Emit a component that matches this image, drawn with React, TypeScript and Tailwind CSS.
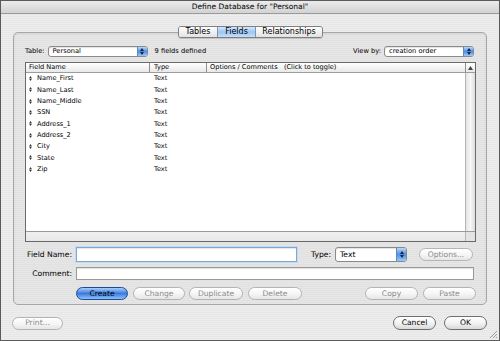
import React from "react";

const fields = [
  "Name_First",
  "Name_Last",
  "Name_Middle",
  "SSN",
  "Address_1",
  "Address_2",
  "City",
  "State",
  "Zip",
];

const pillDefault =
  "border-[#1c4a94] bg-gradient-to-b from-[#a9cff7] via-[#3a7ade] to-[#8fc2f6] text-black";
const pillEnabled =
  "border-[#6e6e6e] bg-gradient-to-b from-white via-[#f3f3f3] to-[#d9d9d9] text-black";
const pillDisabled =
  "border-[#b4b4b4] bg-gradient-to-b from-white via-[#f6f6f6] to-[#e6e6e6] text-[#8a8a8a]";

function Pill({
  label,
  kind,
  className,
}: {
  label: string;
  kind: "default" | "enabled" | "disabled";
  className: string;
}) {
  const look =
    kind === "default" ? pillDefault : kind === "enabled" ? pillEnabled : pillDisabled;
  return (
    <div
      className={`flex items-center justify-center rounded-full border text-[7.6px] leading-none ${look} ${className}`}
    >
      {label}
    </div>
  );
}

function Arrows({ className }: { className?: string }) {
  return (
    <svg width="4" height="7" viewBox="0 0 4 7" className={className}>
      <polygon points="2,0 4,3 0,3" fill="currentColor" />
      <polygon points="0,4 4,4 2,7" fill="currentColor" />
    </svg>
  );
}

function Popup({
  label,
  className,
  text,
}: {
  label: string;
  className: string;
  text: string;
}) {
  return (
    <div
      className={`flex items-stretch overflow-hidden rounded-[3px] border border-[#8a8a8a] bg-white shadow-[inset_0_1px_1px_rgba(0,0,0,0.12)] ${className}`}
    >
      <span className={`flex flex-1 items-center pl-[4px] leading-none text-black ${text}`}>{label}</span>
      <span className="flex w-[10px] items-center justify-center border-l border-[#5f87c4] bg-gradient-to-b from-[#b9d7f8] via-[#4f8ee4] to-[#9ccaf7] text-[#14264a]">
        <Arrows />
      </span>
    </div>
  );
}

export default function App() {
  return (
    <div className="relative flex h-[341px] w-[500px] flex-col overflow-hidden border border-[#5a5a5a] bg-[repeating-linear-gradient(to_bottom,#ededed_0px,#ededed_1px,#e7e7e7_1px,#e7e7e7_2px)] font-['DejaVu_Sans',sans-serif] text-black">
      {/* title bar */}
      <div className="flex h-[13px] items-center justify-center border-b border-[#9a9a9a] bg-gradient-to-b from-[#ececec] to-[#d2d2d2] text-[7.5px] leading-none">
        Define Database for "Personal"
      </div>

      {/* tabs */}
      <div className="relative z-10 mt-[12px] flex justify-center pl-[1px]">
        <div className="flex h-[12px] overflow-hidden rounded-[3px] border border-[#7f7f7f] text-[8px] leading-none shadow-[0_1px_1px_rgba(0,0,0,0.15)]">
          <div className="flex w-[38px] items-center justify-center bg-gradient-to-b from-white to-[#e2e2e2]">
            Tables
          </div>
          <div className="flex w-[39px] items-center justify-center border-x border-[#7b93b5] bg-gradient-to-b from-[#d6e9fd] via-[#9cc6f3] to-[#c4e0fb]">
            Fields
          </div>
          <div className="flex w-[66px] items-center justify-center bg-gradient-to-b from-white to-[#e2e2e2]">
            Relationships
          </div>
        </div>
      </div>

      {/* group box */}
      <div className="mx-[12px] -mt-[6px] flex h-[273px] flex-col rounded-[5px] border border-[#a6a6a6] bg-[repeating-linear-gradient(to_bottom,#e6e6e6_0px,#e6e6e6_1px,#e1e1e1_1px,#e1e1e1_2px)] pl-[11px] pr-[10px] pt-[13px] shadow-[inset_0_1px_2px_rgba(0,0,0,0.08)]">
        <div className="flex h-[11px] items-center text-[6.7px] leading-none">
          <span>Table:</span>
          <Popup label="Personal" className="ml-[3px] h-[11px] w-[100px]" text="text-[6.7px]" />
          <span className="ml-[7px]">9 fields defined</span>
          <span className="ml-auto">View by:</span>
          <Popup label="creation order" className="ml-[3px] mr-[2px] h-[11px] w-[90px]" text="text-[6.7px]" />
        </div>

        {/* field list */}
        <div className="mt-[5px] flex h-[180px] flex-col border border-[#6a6a6a] bg-white text-[6.6px] leading-none">
          <div className="flex h-[10px] border-b border-[#9c9c9c] bg-gradient-to-b from-white to-[#e9e9e9]">
            <div className="flex w-[124px] items-center border-r border-[#8f8f8f] pl-[3px]">Field Name</div>
            <div className="flex w-[57px] items-center border-r border-[#8f8f8f] pl-[4px]">Type</div>
            <div className="flex flex-1 items-center pl-[3px]">
              Options / Comments&nbsp;&nbsp;&nbsp;(Click to toggle)
            </div>
            <div className="flex w-[10px] items-center justify-center border-l border-[#8f8f8f]">
              <svg width="5" height="4" viewBox="0 0 5 4">
                <polygon points="2.5,0 5,4 0,4" fill="#444" />
              </svg>
            </div>
          </div>
          <div className="flex flex-1">
            <div className="flex flex-1 flex-col">
              {fields.map((f) => (
                <div key={f} className="flex h-[11.33px] items-center">
                  <div className="flex w-[125px] items-center pl-[3px]">
                    <Arrows className="h-[5px] w-[3px] text-[#333]" />
                    <span className="ml-[5px]">{f}</span>
                  </div>
                  <div className="pl-[3px]">Text</div>
                </div>
              ))}
            </div>
            <div className="w-[10px] border-l border-[#b5b5b5] bg-gradient-to-r from-[#e4e4e4] via-[#f7f7f7] to-[#dedede]" />
          </div>
          <div className="flex h-[10px] border-t border-[#9a9a9a]">
            <div className="flex-1 bg-gradient-to-b from-[#f0f0f0] to-[#e8e8e8]" />
            <div className="w-[10px] border-l border-[#b5b5b5] bg-[#e3e3e3]" />
          </div>
        </div>

        {/* field name row */}
        <div className="mt-[5px] flex h-[15px] items-center text-[7.6px] leading-none">
          <span className="w-[47px] text-right">Field Name:</span>
          <div className="ml-[4px] h-[15px] w-[221px] border border-[#7ea6d8] bg-white shadow-[0_0_0_1px_#c4daf3,inset_0_1px_1px_rgba(0,0,0,0.1)]" />
          <span className="ml-[10px] w-[24px] text-right">Type:</span>
          <Popup label="Text" className="ml-[4px] h-[15px] w-[72px]" text="text-[7.6px]" />
          <Pill label="Options..." kind="disabled" className="ml-[12px] h-[13px] w-[54px]" />
        </div>

        {/* comment row */}
        <div className="mt-[5px] flex h-[13px] items-center text-[7.6px] leading-none">
          <span className="w-[47px] text-right">Comment:</span>
          <div className="ml-[4px] h-[13px] w-[398px] border border-[#9a9a9a] bg-white shadow-[inset_0_1px_1px_rgba(0,0,0,0.12)]" />
        </div>

        {/* buttons row */}
        <div className="mt-[7px] flex h-[13px] items-center">
          <Pill label="Create" kind="default" className="ml-[51px] h-[13px] w-[52px]" />
          <Pill label="Change" kind="disabled" className="ml-[5px] h-[13px] w-[52px]" />
          <Pill label="Duplicate" kind="disabled" className="ml-[4px] h-[13px] w-[54px]" />
          <Pill label="Delete" kind="disabled" className="ml-[5px] h-[13px] w-[54px]" />
          <Pill label="Copy" kind="disabled" className="ml-auto h-[13px] w-[53px]" />
          <Pill label="Paste" kind="disabled" className="ml-[5px] h-[13px] w-[53px]" />
        </div>
      </div>

      {/* bottom row */}
      <div className="mt-[11px] flex h-[14px] items-center pl-[11px] pr-[12px]">
        <Pill label="Print..." kind="disabled" className="h-[13px] w-[51px]" />
        <Pill label="Cancel" kind="enabled" className="ml-auto h-[14px] w-[43px]" />
        <Pill label="OK" kind="enabled" className="ml-[8px] h-[14px] w-[43px]" />
      </div>

      {/* resize grip */}
      <svg width="9" height="9" viewBox="0 0 9 9" className="absolute bottom-[1px] right-[1px]">
        <path d="M8 1 L1 8 M8 4 L4 8 M8 7 L7 8" stroke="#8a8a8a" strokeWidth="0.8" />
      </svg>
    </div>
  );
}
